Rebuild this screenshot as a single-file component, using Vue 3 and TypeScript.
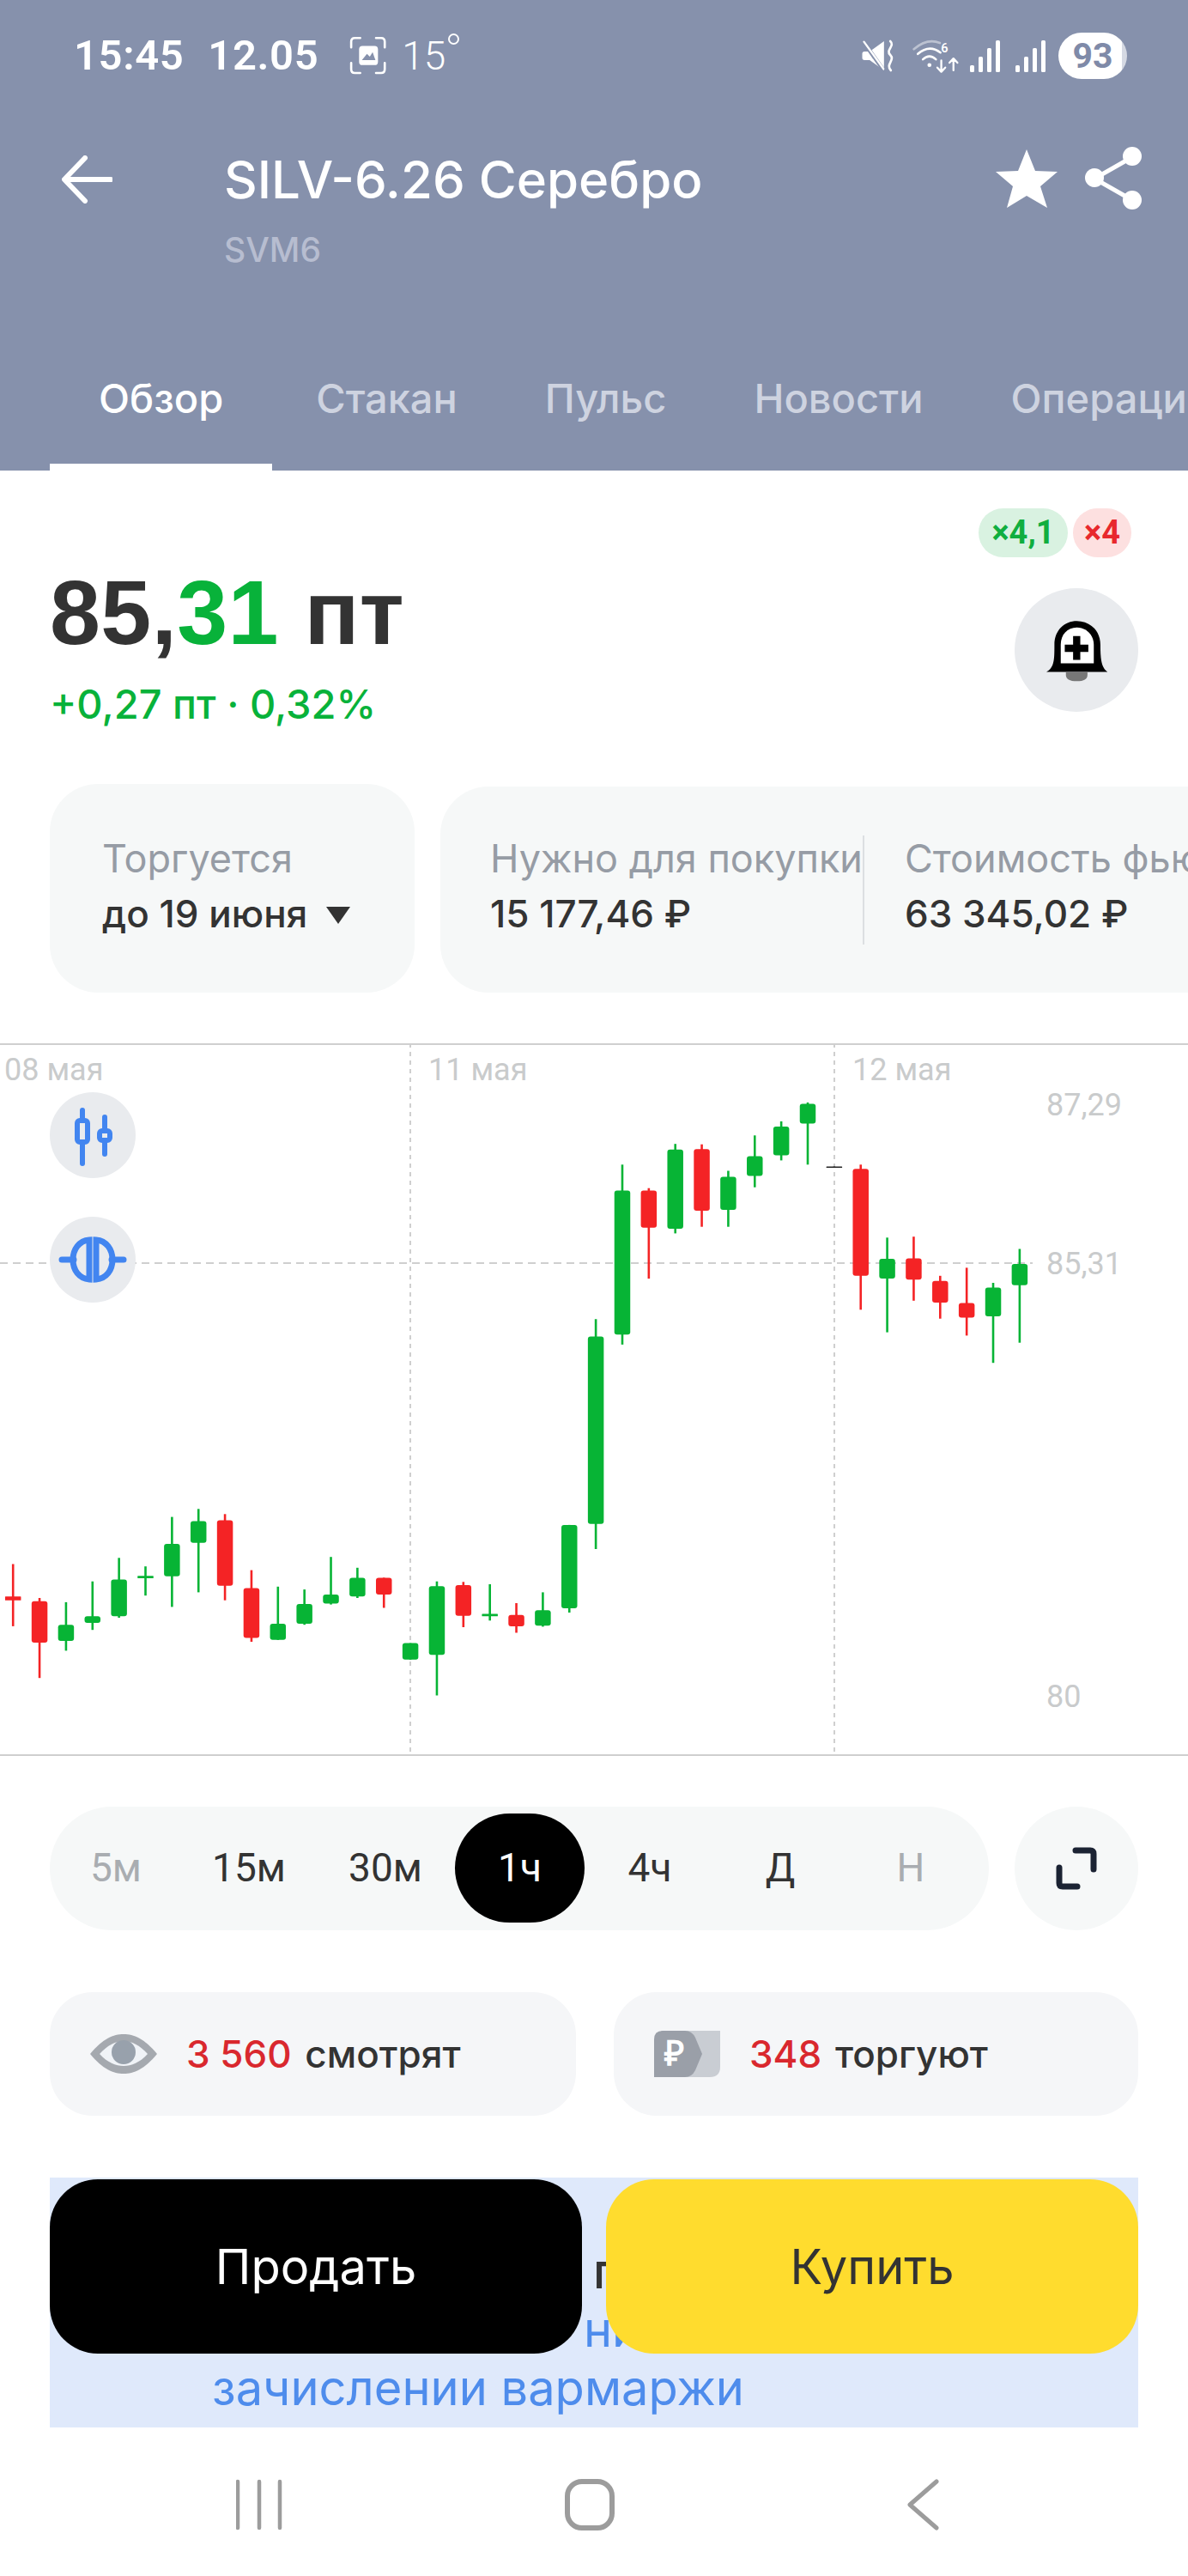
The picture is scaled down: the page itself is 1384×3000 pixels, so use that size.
<script setup lang="ts">
// Candle data in page pixels: wick top, wick bottom, body top, body bottom
type Candle = [number, number, number, number, 'g' | 'r' | 'k'];

const candles: Candle[] = [
  [621.5, 693.9, 659.3, 663.7, 'r'],
  [661, 754.2, 664.8, 713.1, 'r'],
  [665.9, 722.4, 692.2, 710.9, 'g'],
  [641.7, 698.2, 682.3, 690, 'g'],
  [614.3, 684, 639.6, 682.3, 'g'],
  [624.2, 658.2, 635.2, 637.9, 'g'],
  [566.6, 671.4, 597.9, 635.7, 'g'],
  [557.3, 654.4, 571.5, 596.8, 'g'],
  [563.3, 663.7, 570.4, 646.7, 'r'],
  [628.6, 712, 649.4, 707.6, 'r'],
  [647.8, 709.8, 691.1, 709.8, 'g'],
  [651.1, 692.2, 668.1, 691.1, 'g'],
  [613.2, 668.6, 657.1, 667.5, 'g'],
  [625.8, 661, 637.4, 659.3, 'g'],
  [637.4, 672.5, 637.4, 657.1, 'r'],
  [713.6, 732.8, 713.6, 732.8, 'g'],
  [641.7, 774.5, 647.2, 727.3, 'g'],
  [642.3, 695, 646.1, 681.8, 'r'],
  [645, 687.3, 679.6, 682.3, 'g'],
  [667, 701.5, 680.7, 693.9, 'r'],
  [654.4, 694.4, 675.2, 693.3, 'g'],
  [575.9, 678, 575.9, 673, 'g'],
  [336.2, 603.9, 356.5, 574.8, 'g'],
  [156.3, 365.9, 186.5, 354.3, 'g'],
  [183.7, 289.1, 186.5, 229.8, 'r'],
  [132.2, 236.4, 138.8, 230.9, 'g'],
  [132.7, 228.7, 138.2, 210.1, 'r'],
  [163.5, 228.7, 170.6, 209, 'g'],
  [122.3, 182.7, 146.5, 169.5, 'g'],
  [105.9, 151.4, 111.9, 145.4, 'g'],
  [83.9, 156.3, 85.6, 108.6, 'g'],
  [158.6, 159.6, 158.6, 159.6, 'k'],
  [156.3, 325.3, 161.3, 285.8, 'r'],
  [241.3, 351.6, 266, 289.1, 'g'],
  [240.2, 314.8, 265.5, 290.2, 'r'],
  [285.8, 335.7, 291.8, 317, 'r'],
  [276.4, 355.4, 317.6, 334.6, 'r'],
  [294, 387.2, 299.5, 332.9, 'g'],
  [254.5, 363.7, 272.1, 296.7, 'g'],
];

const candleX = (i: number) => 15.2 + i * 30.86;
const candleColor = { g: '#07b435', r: '#f42325', k: '#222222' };

const tabs = [
  { label: 'Обзор', active: true },
  { label: 'Стакан' },
  { label: 'Пульс' },
  { label: 'Новости' },
  { label: 'Операции' },
];

const frames = [
  { label: '5м', muted: true },
  { label: '15м' },
  { label: '30м' },
  { label: '1ч', active: true },
  { label: '4ч' },
  { label: 'Д' },
  { label: 'Н', muted: true },
];
</script>

<template>
  <div class="screen">
    <header class="head">
      <div class="status">
        <span class="clock">15:45</span>
        <span class="clock date">12.05</span>
        <svg class="shot" viewBox="1105 65 135 140" width="46" height="46">
          <path d="M1112 105V85Q1112 72 1125 72H1144M1200 72H1218Q1231 72 1231 85V105M1231 160V182Q1231 196 1218 196H1200M1144 196H1125Q1112 196 1112 182V160" fill="none" stroke="#fff" stroke-width="8" stroke-linecap="round" />
          <rect x="1140" y="100" width="67" height="68" rx="12" fill="#fff" />
          <path d="M1150 150L1168 128L1178 138L1188 122L1198 150Z" fill="#8691ac" />
        </svg>
        <span class="temp">15</span>
        <span class="deg"></span>
        <span class="status-right">
          <svg viewBox="135 75 125 120" width="42" height="40">
            <path d="M142 128Q142 120 150 120H168L218 84V186L168 150H150Q142 150 142 142Z" fill="#fff" />
            <path d="M146 86L214 182" stroke="#8691ac" stroke-width="14" />
            <path d="M148 86L216 180" stroke="#fff" stroke-width="7" stroke-linecap="round" />
            <path d="M240 84C258 100 222 115 240 132C258 150 222 165 242 186" fill="none" stroke="#fff" stroke-width="8" stroke-linecap="round" />
          </svg>
          <svg class="wifi" viewBox="310 70 170 130" width="56" height="43">
            <path d="M318 110Q365 70 410 88" fill="none" stroke="#fff" stroke-opacity=".45" stroke-width="8" stroke-linecap="round" />
            <path d="M332 127Q372 92 412 122M350 146Q373 125 396 146" fill="none" stroke="#fff" stroke-width="8" stroke-linecap="round" />
            <circle cx="373" cy="166" r="7" fill="#fff" />
            <text x="414" y="122" class="wifi-six">6</text>
            <path d="M415 150V188M401 175L415 190L429 175M458 185V146M444 158L458 143L472 158" fill="none" stroke="#fff" stroke-width="7" stroke-linecap="round" stroke-linejoin="round" />
          </svg>
          <svg class="bars" viewBox="0 0 35 37" width="35" height="37">
            <rect x="0" y="29" width="5" height="8" rx="1.5" fill="#fff" />
            <rect x="10" y="19" width="5" height="18" rx="1.5" fill="#fff" />
            <rect x="20" y="9" width="5" height="28" rx="1.5" fill="#fff" />
            <rect x="30" y="0" width="5" height="37" rx="1.5" fill="#fff" />
          </svg>
          <svg class="bars second" viewBox="0 0 35 37" width="35" height="37">
            <rect x="0" y="29" width="5" height="8" rx="1.5" fill="#fff" />
            <rect x="10" y="19" width="5" height="18" rx="1.5" fill="#fff" />
            <rect x="20" y="9" width="5" height="28" rx="1.5" fill="#fff" />
            <rect x="30" y="0" width="5" height="37" rx="1.5" fill="#fff" />
          </svg>
          <span class="battery">93</span>
        </span>
      </div>

      <div class="topbar">
        <svg class="back" viewBox="0 0 59 56" width="59" height="56">
          <path d="M57 28H5M27 3L3 28L27 53" fill="none" stroke="#fff" stroke-width="6" stroke-linecap="round" stroke-linejoin="round" />
        </svg>
        <div class="heading">
          <div class="title">SILV-6.26 Серебро</div>
          <div class="ticker">SVM6</div>
        </div>
        <div class="actions">
          <svg viewBox="0 0 72 68" width="72" height="68">
            <polygon points="36,0 46,25 72,26 52,43 60,68 36,54 13,68 20,43 0,26 26,25" fill="#fff" />
          </svg>
          <svg viewBox="0 0 66 74" width="66" height="74">
            <path d="M55 12L11 37L55 62" fill="none" stroke="#fff" stroke-width="5" />
            <circle cx="55" cy="11" r="11" fill="#fff" />
            <circle cx="11" cy="36" r="11" fill="#fff" />
            <circle cx="55" cy="62" r="11" fill="#fff" />
          </svg>
        </div>
      </div>

      <nav class="tabs">
        <span v-for="tab in tabs" :key="tab.label" class="tab" :class="{ active: tab.active }">{{ tab.label }}</span>
      </nav>
    </header>

    <section class="quote">
      <div class="chips">
        <span class="chip long">×4,1</span>
        <span class="chip short">×4</span>
      </div>
      <div class="price-row">
        <div>
          <div class="price">85,<span class="up">31</span> пт</div>
          <div class="change">+0,27 пт · 0,32%</div>
        </div>
        <button class="bell">
          <svg viewBox="348 415 230 230" width="77" height="77">
            <path d="M425 606H500V615Q500 637 463 637Q425 637 425 615Z" fill="#777" />
            <path d="M357 605C385 590 385 560 385 510C385 460 420 428 463 428C507 428 545 460 545 510C545 560 548 590 570 605Z" fill="#000" />
            <path d="M407 575H522V510C522 475 495 450 463 450C430 450 407 475 407 510Z" fill="#fff" />
            <path d="M450 480H475V510H503V535H475V563H450V535H421V510H450Z" fill="#000" />
          </svg>
        </button>
      </div>
    </section>

    <section class="facts">
      <div class="fact-card trade">
        <div class="fact-label">Торгуется</div>
        <div class="fact-value">до 19 июня <i class="caret"></i></div>
      </div>
      <div class="fact-card money">
        <div class="fact-col">
          <div class="fact-label">Нужно для покупки</div>
          <div class="fact-value">15 177,46 ₽</div>
        </div>
        <div class="fact-col last">
          <div class="fact-label">Стоимость фьючерса</div>
          <div class="fact-value">63 345,02 ₽</div>
        </div>
      </div>
    </section>

    <section class="chart">
      <svg class="plot" viewBox="0 15 1384 830" width="1384" height="830">
        <line x1="478" y1="15" x2="478" y2="845" class="grid" />
        <line x1="972" y1="15" x2="972" y2="845" class="grid" />
        <line x1="0" y1="271" x2="1203" y2="271" class="grid-h" />
        <text x="5" y="58" class="axis">08 мая</text>
        <text x="499" y="58" class="axis">11 мая</text>
        <text x="993" y="58" class="axis">12 мая</text>
        <text x="1219" y="99" class="axis">87,29</text>
        <text x="1219" y="284" class="axis">85,31</text>
        <text x="1219" y="788" class="axis">80</text>
        <g v-for="(c, i) in candles" :key="i">
          <line :x1="candleX(i)" :x2="candleX(i)" :y1="c[0]" :y2="c[1]" :stroke="candleColor[c[4]]" stroke-width="2.6" />
          <rect :x="candleX(i) - 9.25" :y="c[2]" width="18.5" :height="Math.max(c[3] - c[2], 1.5)" :rx="c[3] - c[2] > 6 ? 3 : 0.5" :fill="candleColor[c[4]]" />
        </g>
      </svg>
      <button class="chart-btn first">
        <svg viewBox="0 0 100 100" width="100" height="100">
          <path d="M38 21V83" stroke="#4285f0" stroke-width="6" stroke-linecap="round" />
          <rect x="32" y="33" width="12" height="25" rx="3" fill="#e9ebee" stroke="#4285f0" stroke-width="6" />
          <path d="M64 29V72" stroke="#4285f0" stroke-width="6" stroke-linecap="round" />
          <rect x="58" y="45" width="12" height="11" rx="3" fill="#e9ebee" stroke="#4285f0" stroke-width="6" />
        </svg>
      </button>
      <button class="chart-btn second">
        <svg viewBox="0 0 100 100" width="100" height="100">
          <path d="M14 50H28M72 50H86" stroke="#4285f0" stroke-width="7" stroke-linecap="round" />
          <path d="M46 27V73C34 72 27 62 27 50C27 38 34 28 46 27Z" fill="none" stroke="#4285f0" stroke-width="7" />
          <path d="M54 27V73C66 72 73 62 73 50C73 38 66 28 54 27Z" fill="none" stroke="#4285f0" stroke-width="7" />
        </svg>
      </button>
    </section>

    <section class="frames">
      <div class="frame-bar">
        <span
          v-for="f in frames"
          :key="f.label"
          class="frame"
          :class="{ active: f.active, muted: f.muted }"
        >{{ f.label }}</span>
      </div>
      <button class="expand">
        <svg viewBox="0 0 60 60" width="60" height="60">
          <path d="M29 9H46Q50 9 50 13V31" fill="none" stroke="#1b2333" stroke-width="7" stroke-linecap="round" />
          <path d="M10 29V47Q10 51 14 51H31" fill="none" stroke="#1b2333" stroke-width="7" stroke-linecap="round" />
        </svg>
      </button>
    </section>

    <section class="stats">
      <div class="stat">
        <svg viewBox="0 0 78 46" width="78" height="46">
          <path d="M0 23C15 5 27 0 39 0C51 0 63 5 78 23C63 41 51 46 39 46C27 46 15 41 0 23Z" fill="#a5a9af" />
          <path d="M11 23C20 13 30 8 39 8C48 8 58 13 67 23C58 33 48 37 39 37C30 37 20 33 11 23Z" fill="#f0f3f7" />
          <circle cx="39" cy="21" r="14" fill="#98a1ac" />
        </svg>
        <span class="stat-text"><b>3 560</b> смотрят</span>
      </div>
      <div class="stat">
        <svg viewBox="0 0 77 54" width="77" height="54">
          <path d="M8 0H77V42Q77 54 65 54H8Z" fill="#c9cdd3" />
          <path d="M10 0H36Q44 0 48 8L56 27L48 46Q44 54 36 54H0V10Q0 0 10 0Z" fill="#9a9fa8" />
          <text x="12" y="40" class="rub">₽</text>
        </svg>
        <span class="stat-text"><b>348</b> торгуют</span>
      </div>
    </section>

    <section class="promo">
      <div class="promo-title">г</div>
      <div class="promo-link mid">ни</div>
      <div class="promo-link">зачислении вармаржи</div>
    </section>

    <div class="deal">
      <button class="deal-btn sell">Продать</button>
      <button class="deal-btn buy">Купить</button>
    </div>

    <footer class="sysnav">
      <svg viewBox="0 0 54 60" width="54" height="60">
        <path d="M2 3V57M27 3V57M51 3V57" stroke="#9c9c9c" stroke-width="4.5" stroke-linecap="round" />
      </svg>
      <svg class="home" viewBox="0 0 58 60" width="58" height="60">
        <rect x="3" y="3" width="52" height="54" rx="17" fill="none" stroke="#9c9c9c" stroke-width="6" />
      </svg>
      <svg class="sback" viewBox="0 0 38 60" width="38" height="60">
        <path d="M35 3L4 30L35 57" fill="none" stroke="#9c9c9c" stroke-width="5" stroke-linecap="round" stroke-linejoin="round" />
      </svg>
    </footer>
  </div>
</template>

<style scoped>
.screen {
  position: relative;
  width: 1384px;
  height: 3000px;
  background: #fff;
  overflow: hidden;
  font-family: Inter, Roboto, "Liberation Sans", sans-serif;
  color: #333;
}

button { border: 0; padding: 0; font: inherit; }

/* header */
.head { height: 548px; background: #8691ac; color: #fff; }

.status {
  display: flex;
  align-items: center;
  height: 130px;
  padding: 0 71px 0 86px;
}
.clock { font-size: 49px; font-weight: 600; line-height: 60px; font-family: Roboto, sans-serif; letter-spacing: 0.6px; }
.date { margin-left: 28px; }
.shot { margin-left: 35px; }
.temp { margin-left: 16px; font-size: 46px; font-weight: 300; font-family: Roboto, sans-serif; }
.deg {
  width: 9px;
  height: 9px;
  border: 2px solid #fff;
  border-radius: 50%;
  align-self: flex-start;
  margin: 39px 0 0 3px;
}
.status-right { display: flex; align-items: center; margin-left: auto; }
.wifi { margin-left: 18px; }
.wifi-six { font: 600 44px Roboto, sans-serif; fill: #fff; }
.bars { margin-left: 12px; }
.bars.second { margin-left: 18px; }
.battery {
  margin-left: 15px;
  width: 80px;
  height: 54px;
  border-radius: 27px;
  background: linear-gradient(90deg, #fff 92%, #d5d9e3 92%);
  color: #7f8aa8;
  font: 700 41px/54px Roboto, sans-serif;
  text-align: center;
}

.topbar { display: flex; align-items: flex-start; padding: 41px 54px 0 72px; height: 269px; box-sizing: border-box; }
.back { margin-top: 10px; }
.heading { margin-left: 130px; }
.title { font-size: 60px; line-height: 76px; font-weight: 500; white-space: nowrap; }
.ticker { margin-top: 20px; font-size: 39px; line-height: 48px; font-weight: 500; color: #b7bdd0; }
.actions { display: flex; align-items: center; gap: 32px; margin-left: auto; }

.tabs { display: flex; height: 149px; padding-left: 58px; overflow: hidden; white-space: nowrap; }
.tab {
  box-sizing: border-box;
  height: 149px;
  padding: 37px 51px 0;
  font-size: 47px;
  line-height: 56px;
  font-weight: 500;
  color: #ced3e0;
}
.tab.active {
  padding: 37px 57px 0;
  color: #fff;
  border-bottom: 8px solid #fff;
}

/* quote */
.quote { height: 365px; box-sizing: border-box; padding: 44px 58px 0; }
.chips { display: flex; justify-content: flex-end; gap: 6px; padding-right: 8px; }
.chip { height: 57px; border-radius: 29px; font-size: 38px; line-height: 57px; font-weight: 700; font-family: Roboto, sans-serif; text-align: center; }
.long { width: 104px; background: #d9f2e1; color: #10ae3f; }
.short { width: 68px; background: #fde0e0; color: #e8282d; }

.price-row { display: flex; justify-content: space-between; align-items: flex-start; }
.price { font: 700 106px/124px "Liberation Sans", sans-serif; margin-top: 2px; letter-spacing: 0.3px; }
.up { color: #08b23a; }
.change { margin-top: 16px; font-size: 47px; line-height: 58px; font-weight: 500; color: #08b23a; }
.bell {
  display: flex;
  align-items: center;
  justify-content: center;
  width: 144px;
  height: 144px;
  margin-top: 36px;
  border-radius: 50%;
  background: #e9ebee;
}

/* fact cards */
.facts { display: flex; align-items: flex-end; gap: 30px; height: 243px; padding-left: 58px; overflow: hidden; }
.fact-card { box-sizing: border-box; flex: none; background: #f6f8f8; border-radius: 56px; white-space: nowrap; }
.trade { width: 425px; height: 243px; padding: 60px 0 0 61px; }
.money { display: flex; width: 1000px; height: 240px; padding: 57px 0 0 58px; }
.fact-col { width: 472px; }
.fact-col.last { position: relative; padding-left: 49px; }
.fact-col.last::before {
  content: "";
  position: absolute;
  left: 0;
  top: 0;
  width: 2px;
  height: 127px;
  background: #dcdfe2;
}
.fact-label { font-size: 45px; line-height: 54px; color: #969ca5; }
.fact-value { margin-top: 10px; font-size: 44px; line-height: 54px; font-weight: 500; color: #333; }
.caret {
  display: inline-block;
  width: 0;
  height: 0;
  margin-left: 10px;
  vertical-align: 4px;
  border-left: 14px solid transparent;
  border-right: 14px solid transparent;
  border-top: 20px solid #333;
}

/* chart */
.chart {
  position: relative;
  height: 830px;
  margin-top: 59px;
  box-shadow: inset 0 2px 0 #cfcfcf, inset 0 -2px 0 #cfcfcf;
}
.plot { display: block; }
.grid { stroke: #cfcfcf; stroke-width: 2; stroke-dasharray: 5 5; }
.grid-h { stroke: #cfcfcf; stroke-width: 2; stroke-dasharray: 9 6; }
.axis { font: 400 36px Roboto, sans-serif; fill: #c9cbcc; }
.chart-btn {
  position: absolute;
  left: 58px;
  width: 100px;
  height: 100px;
  border-radius: 50%;
  background: #e9ebee;
}
.chart-btn svg { display: block; }
.chart-btn.first { top: 57px; }
.chart-btn.second { top: 202px; }

/* time frames */
.frames { display: flex; gap: 30px; margin-top: 59px; padding: 0 58px; }
.frame-bar {
  display: grid;
  grid-template-columns: 154px 156px 162px 151px 152px 152px 152px;
  width: 1095px;
  height: 144px;
  box-sizing: border-box;
  padding: 8px 0 9px;
  border-radius: 72px;
  background: #f6f8f8;
}
.frame { font: 400 46px/127px Roboto, sans-serif; text-align: center; color: #333; }
.frame.muted { color: #a9adb1; }
.frame.active { background: #000; color: #fff; border-radius: 64px; }
.expand {
  display: flex;
  align-items: center;
  justify-content: center;
  width: 144px;
  height: 144px;
  border-radius: 50%;
  background: #f6f8f8;
}

/* audience */
.stats { display: grid; grid-template-columns: 613px 611px; gap: 44px; margin-top: 72px; padding: 0 58px; }
.stat {
  display: flex;
  align-items: center;
  gap: 34px;
  height: 144px;
  padding-left: 47px;
  border-radius: 50px;
  background: #f5f6f8;
}
.stat-text { font-size: 44px; line-height: 54px; font-weight: 500; color: #333; white-space: nowrap; }
.stat-text b { font-weight: 500; color: #d9282e; margin-right: 4px; }
.rub { font: 700 40px "Liberation Sans", sans-serif; fill: #fff; }

/* promo behind the buttons */
.promo {
  box-sizing: border-box;
  height: 291px;
  margin: 72px 58px 0;
  padding-top: 75px;
  background: #dfe9fb;
  font-size: 56px;
  line-height: 68px;
  font-weight: 400;
  white-space: nowrap;
}
.promo-title { padding-left: 633px; color: #333; font-weight: 500; }
.promo-link { padding-left: 189px; color: #4e8cec; }
.promo-link.mid { padding-left: 622px; }

.deal { position: absolute; left: 58px; top: 2538px; display: flex; gap: 28px; }
.deal-btn { width: 620px; height: 203px; border-radius: 56px; font-size: 56px; }
.sell { background: #000; color: #fff; }
.buy { background: #ffdc2e; color: #333; }

.sysnav { display: flex; align-items: flex-start; height: 173px; padding: 60px 0 0 275px; box-sizing: border-box; }
.home { margin-left: 329px; }
.sback { margin-left: 340px; }
</style>
